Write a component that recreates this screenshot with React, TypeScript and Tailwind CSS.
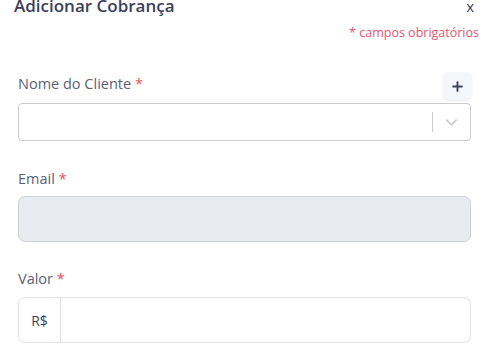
import { ChevronDown, Plus } from 'lucide-react';

const font = { fontFamily: '"Open Sans", "Noto Sans", sans-serif' };

function Label({ text }: { text: string }) {
  return (
    <div className="text-[14.5px] leading-[20px] text-[#5b5e78] font-medium">
      {text} <span className="text-[#e7515a]">*</span>
    </div>
  );
}

export default function App() {
  return (
    <div className="w-[489px] h-[357px] bg-white overflow-hidden" style={font}>
      {/* Header */}
      <div className="flex items-start justify-between pl-[14px] pr-[15px] -mt-[6px]">
        <h5 className="text-[17px] leading-[24px] font-semibold text-[#3b3f5c]">
          Adicionar Cobrança
        </h5>
        <button className="text-[15px] leading-[24px] text-[#3b3f5c]">x</button>
      </div>

      <div className="flex justify-end pr-[10px] mt-[6px]">
        <span className="text-[12.5px] leading-[18px] text-[#e4566f]">* campos obrigatórios</span>
      </div>

      {/* Cliente */}
      <div className="px-[18px] mt-[30px]">
        <div className="flex items-end justify-between">
          <div className="pb-[9px]">
            <Label text="Nome do Cliente" />
          </div>
          <button className="w-[29px] h-[28px] -mr-px rounded-md bg-[#f4f6f9] shadow-[0_1px_2px_rgba(0,0,0,0.08)] flex items-center justify-center text-[#3b3f5c] mb-[3px]">
            <Plus size={15} strokeWidth={3} />
          </button>
        </div>
        <div className="h-[38px] border border-[#cccccc] rounded-[4px] flex items-center">
          <div className="flex-1" />
          <div className="w-px h-[20px] bg-[#cccccc]" />
          <div className="w-[37px] flex items-center justify-center text-[#cccccc]">
            <ChevronDown size={19} strokeWidth={2.2} />
          </div>
        </div>
      </div>

      {/* Email */}
      <div className="px-[18px] mt-[28px]">
        <div className="mb-[7px]">
          <Label text="Email" />
        </div>
        <div className="h-[46px] border border-[#ccd0d7] rounded-[7px] bg-[#e8ebef]" />
      </div>

      {/* Valor */}
      <div className="px-[18px] mt-[27px]">
        <div className="mb-[8px]">
          <Label text="Valor" />
        </div>
        <div className="h-[46px] flex">
          <div className="w-[43px] border border-[#e0e2e8] rounded-l-[7px] flex items-center justify-center text-[14px] text-[#3b3f5c]">
            R$
          </div>
          <div className="flex-1 border border-l-0 border-[#e0e2e8] rounded-r-[7px]" />
        </div>
      </div>
    </div>
  );
}
